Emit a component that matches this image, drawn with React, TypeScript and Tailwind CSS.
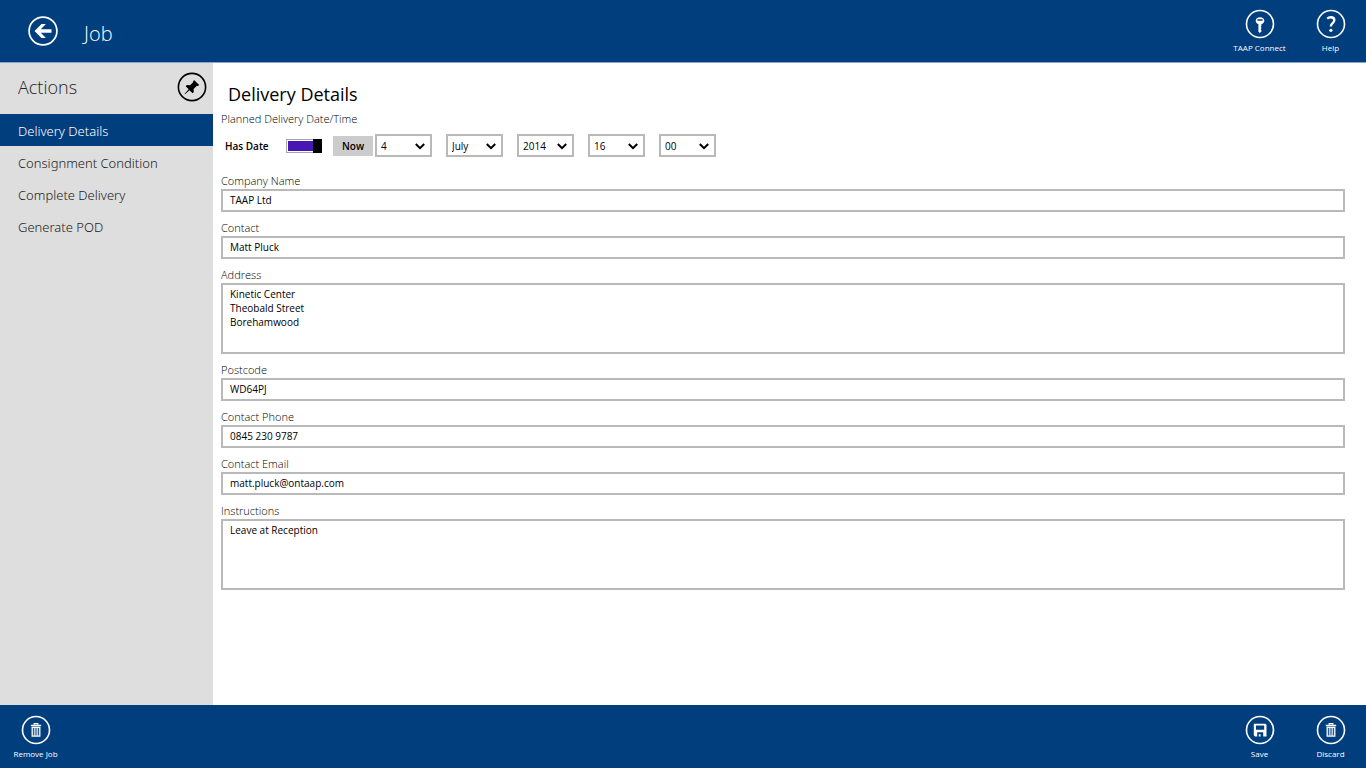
import { useState } from "react";
import type { ReactNode } from "react";

const actions = ["Delivery Details", "Consignment Condition", "Complete Delivery", "Generate POD"];

const months = [
  "January", "February", "March", "April", "May", "June",
  "July", "August", "September", "October", "November", "December",
];

const dateParts = [
  { label: "Day", value: "4", options: Array.from({ length: 31 }, (_, i) => String(i + 1)) },
  { label: "Month", value: "July", options: months },
  { label: "Year", value: "2014", options: ["2013", "2014", "2015", "2016"] },
  { label: "Hour", value: "16", options: Array.from({ length: 24 }, (_, i) => String(i).padStart(2, "0")) },
  { label: "Minute", value: "00", options: ["00", "15", "30", "45"] },
];

const fields = [
  { id: "company", label: "Company Name", value: "TAAP Ltd" },
  { id: "contact", label: "Contact", value: "Matt Pluck" },
  { id: "address", label: "Address", value: "Kinetic Center\nTheobald Street\nBorehamwood", multiline: true },
  { id: "postcode", label: "Postcode", value: "WD64PJ" },
  { id: "phone", label: "Contact Phone", value: "0845 230 9787" },
  { id: "email", label: "Contact Email", value: "matt.pluck@ontaap.com" },
  { id: "instructions", label: "Instructions", value: "Leave at Reception", multiline: true },
];

function BackIcon() {
  return (
    <svg viewBox="0 0 30 30" className="size-[30px]" fill="none" stroke="currentColor">
      <circle cx="15" cy="15" r="13.9" strokeWidth="1.7" />
      <path d="M6.5 15 13.5 8h4.4L12.8 13.2H23.5v3.6H12.8l5.1 5.2h-4.4z" fill="currentColor" stroke="none" />
    </svg>
  );
}

function PinIcon() {
  return (
    <svg viewBox="0 0 30 30" className="size-[30px]" fill="none" stroke="currentColor">
      <circle cx="15" cy="15" r="13.6" strokeWidth="1.6" />
      <path
        d="M17.3 8.2 22.2 13l-1.3.9-1-.2-3.3 3.4.2 3-1.2 1.2-3.1-3.1L8.2 22l-.6.2.2-.6 3.9-4.3-3-3.1 1.2-1.2 3.2.3 3.2-3.4-.2-1z"
        fill="currentColor"
        stroke="none"
      />
    </svg>
  );
}

function KeyIcon() {
  return (
    <svg viewBox="0 0 30 30" className="size-[30px]" fill="none" stroke="currentColor">
      <circle cx="15" cy="15" r="13.5" strokeWidth="1.6" />
      <path
        d="M15 8.2c-2.6 0-4.3 1.5-4.3 3.5 0 1.6 1.1 2.9 2.7 3.4v7.6l1.4 1.4 1.6-1.5v-1.5l-.8-.8.8-.8v-1l-.7-.7.7-.7v-2c1.7-.5 2.9-1.8 2.9-3.4 0-2-1.7-3.5-4.3-3.5zm-2.6 2h5.2v1.5h-5.2z"
        fill="currentColor"
        fillRule="evenodd"
        stroke="none"
      />
    </svg>
  );
}

function HelpIcon() {
  return (
    <svg viewBox="0 0 30 30" className="size-[30px]" fill="none" stroke="currentColor">
      <circle cx="15" cy="15" r="13.5" strokeWidth="1.6" />
      <path d="M11.2 9.6c1.1-.9 2.3-1.3 3.6-1.3 2.1 0 3.5 1.1 3.5 2.9 0 2.7-3.4 3-3.4 5.8v.6" strokeWidth="2.4" />
      <circle cx="14.9" cy="21.3" r="1.6" fill="currentColor" stroke="none" />
    </svg>
  );
}

function BinIcon() {
  return (
    <svg viewBox="0 0 30 30" className="size-[30px]" fill="none" stroke="currentColor">
      <circle cx="15" cy="15" r="13.5" strokeWidth="1.6" />
      <path d="M13.2 9.6V8.6h3.6v1M9.8 10.5h10.4" strokeWidth="1.3" />
      <path d="M11.2 12.3h7.6v8.9h-7.6z" strokeWidth="1.3" />
      <path d="M13.3 12.5v8.5M15 12.5v8.5M16.7 12.5v8.5" strokeWidth=".9" />
    </svg>
  );
}

function SaveIcon() {
  return (
    <svg viewBox="0 0 30 30" className="size-[30px]" fill="none" stroke="currentColor">
      <circle cx="15" cy="15" r="13.5" strokeWidth="1.6" />
      <path
        d="M8.8 8.8h11.6l1.1 1V21.5H10L8.8 20.3zm2.2 1.8v4.1h8.2v-4.1zm1.2 6.6v4.3h1.6v-2.2h1.8v2.2h2.6v-4.3z"
        fill="currentColor"
        fillRule="evenodd"
        stroke="none"
      />
    </svg>
  );
}

function BarButton({ label, children }: { label: string; children: ReactNode }) {
  return (
    <button type="button" className="flex w-[71px] flex-col items-center gap-[3px] text-[8px] leading-3 font-medium text-white">
      {children}
      <span className="whitespace-nowrap">{label}</span>
    </button>
  );
}

function DateSelect({ label, value, options }: { label: string; value: string; options: string[] }) {
  return (
    <div className="relative">
      <select
        aria-label={label}
        defaultValue={value}
        className="block h-[23px] w-[57px] appearance-none border-2 border-[#b9b9b9] bg-white pl-1 text-[10px] leading-4 text-black"
      >
        {options.map((option) => (
          <option key={option}>{option}</option>
        ))}
      </select>
      <svg
        viewBox="0 0 10 7"
        className="pointer-events-none absolute top-[9px] right-[7px] h-[7px] w-[10px]"
        fill="none"
        stroke="black"
        strokeWidth="2"
      >
        <path d="m.8 1 4.2 4.2L9.2 1" />
      </svg>
    </div>
  );
}

export default function App() {
  const [active, setActive] = useState(actions[0]);

  return (
    <div className="flex min-h-screen flex-col bg-white font-['Open_Sans','Noto_Sans',sans-serif] text-black">
      <header className="flex h-[63px] justify-between border-b border-[#8aa5c6] bg-[#003e7e] text-white">
        <div className="flex items-center gap-[26px] pl-7">
          <button type="button" aria-label="Back">
            <BackIcon />
          </button>
          <h1 className="pt-[6px] text-[20px] leading-6 font-light">Job</h1>
        </div>
        <div className="flex items-start pt-[9px]">
          <BarButton label="TAAP Connect">
            <KeyIcon />
          </BarButton>
          <BarButton label="Help">
            <HelpIcon />
          </BarButton>
        </div>
      </header>

      <div className="flex flex-1">
        <aside className="w-[213px] shrink-0 bg-[#dedede] text-[#222]">
          <div className="flex h-[51px] items-center justify-between pr-[6px] pb-1 pl-[18px]">
            <h2 className="text-[18px] leading-6 font-light">Actions</h2>
            <button type="button" aria-label="Pin" className="text-black">
              <PinIcon />
            </button>
          </div>
          <nav className="font-['Noto_Sans','Open_Sans',sans-serif] text-[13px] leading-4 font-light">
            {actions.map((action) => (
              <a
                key={action}
                href="#"
                onClick={() => setActive(action)}
                className={
                  action === active
                    ? "block bg-[#003e7e] pt-[9px] pb-[7px] pl-[18px] text-white"
                    : "block pt-[9px] pb-[7px] pl-[18px]"
                }
              >
                {action}
              </a>
            ))}
          </nav>
        </aside>

        <main className="flex-1 pt-[19px] pr-[21px] pb-8 pl-2">
          <h2 className="pl-[7px] text-[18px] leading-6">Delivery Details</h2>
          <form>
            <fieldset>
              <legend className="pt-[5px] text-[11px] leading-4 font-light">Planned Delivery Date/Time</legend>
              <div className="flex items-center pt-[7px]">
                <label htmlFor="has-date" className="w-[65px] pl-1 text-[10px] leading-4 font-semibold">
                  Has Date
                </label>
                <input
                  id="has-date"
                  type="checkbox"
                  role="switch"
                  defaultChecked
                  className="flex h-[14px] w-9 appearance-none justify-start border border-[#a6a6a6] bg-white bg-clip-content p-px after:-my-[2px] after:h-[14px] after:w-[9px] after:bg-black checked:justify-end checked:bg-[#4617b4] checked:after:-mr-[2px]"
                />
                <button
                  type="button"
                  className="ml-[11px] h-5 w-10 bg-[#cccccc] text-[10px] leading-4 font-semibold"
                >
                  Now
                </button>
                <div className="flex gap-[14px] pl-[2px]">
                  {dateParts.map((part) => (
                    <DateSelect key={part.label} {...part} />
                  ))}
                </div>
              </div>
            </fieldset>

            <div className="flex flex-col gap-2 pt-4">
              {fields.map((field) => (
                <div key={field.id}>
                  <label htmlFor={field.id} className="block text-[11px] leading-4 font-light">
                    {field.label}
                  </label>
                  {field.multiline ? (
                    <textarea
                      id={field.id}
                      defaultValue={field.value}
                      className="block h-[71px] w-full resize-none border-2 border-[#b9b9b9] px-[7px] py-[2px] text-[10px] leading-[14px]"
                    />
                  ) : (
                    <input
                      id={field.id}
                      type="text"
                      defaultValue={field.value}
                      className="block h-[23px] w-full border-2 border-[#b9b9b9] px-[7px] pb-px text-[10px] leading-[14px]"
                    />
                  )}
                </div>
              ))}
            </div>
          </form>
        </main>
      </div>

      <footer className="flex h-[63px] justify-between bg-[#003e7e] pt-[10px]">
        <BarButton label="Remove Job">
          <BinIcon />
        </BarButton>
        <div className="flex">
          <BarButton label="Save">
            <SaveIcon />
          </BarButton>
          <BarButton label="Discard">
            <BinIcon />
          </BarButton>
        </div>
      </footer>
    </div>
  );
}
